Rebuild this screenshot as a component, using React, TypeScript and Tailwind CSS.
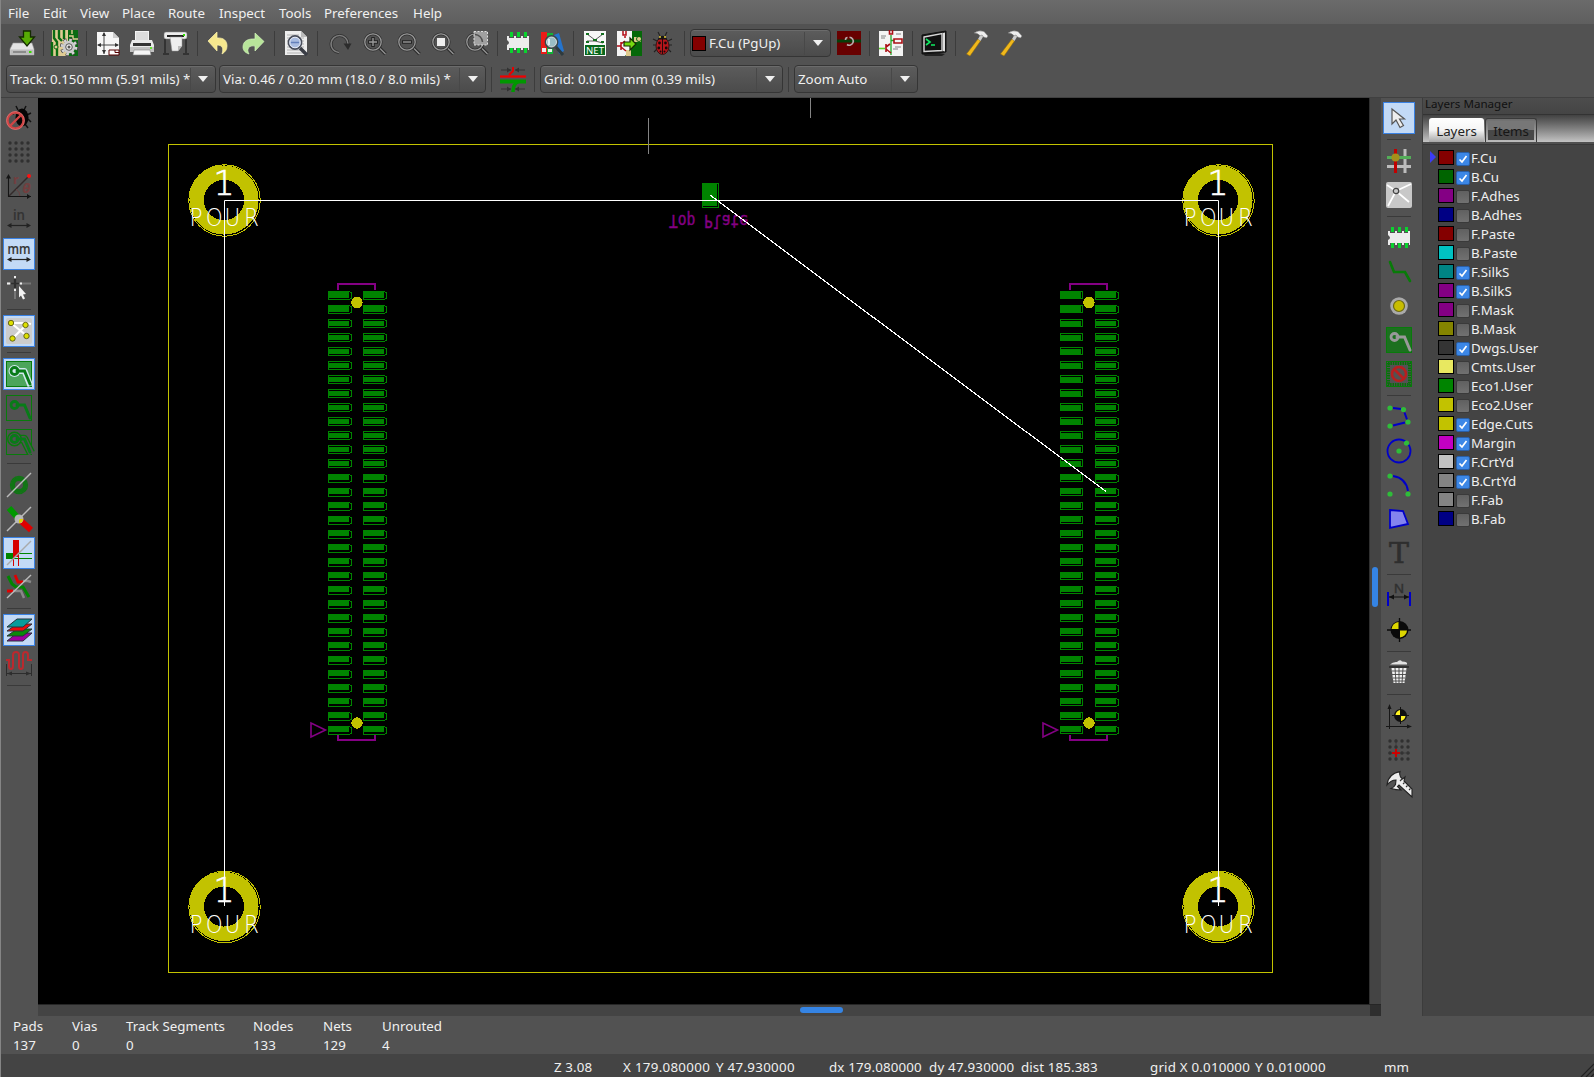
import React from "react";

type P = { children?: React.ReactNode };

const Icon = ({ children }: P) => (
  <svg className="block h-[26px] w-[26px] shrink-0 overflow-visible" viewBox="0 0 26 26" fill="none">
    {children}
  </svg>
);

const Save = () => (
  <Icon>
    <path d="M4 13h19l2 6v6H1v-6z" fill="#e4e4e4" stroke="#999" strokeWidth=".6" />
    <path d="M1.500 19.500h23v5.500h-23z" fill="#bdbdbd" />
    <path d="M4 22h13" stroke="#8b8b8b" strokeWidth="2" />
    <rect x="20" y="21" width="2.500" height="2" fill="#3ad900" />
    <path d="M14.500 1h7v6h4L18 16l-7.500-9h4z" fill="#57ab05" stroke="#142b00" strokeWidth="1.300" />
  </Icon>
);
const Board = () => (
  <Icon>
    <rect width="26" height="26" fill="#e0cc94" />
    <path d="M16 0h10v26H16z" fill="#0b6b12" />
    <path d="M17 6h4v3h5M20 0v4" stroke="#e0cc94" strokeWidth="1.400" />
    <path d="M2 0v8l3 4v14M7 0v8l3 3M12 0v9M0 12v14" stroke="#0b6b12" strokeWidth="2.400" />
    <circle cx="4" cy="17" r="2" fill="#e0cc94" stroke="#0b6b12" />
    <circle cx="17" cy="17" r="7" stroke="#4a4a4a" strokeWidth="4.200" strokeDasharray="3 2.500" />
    <circle cx="17" cy="17" r="7" stroke="#d4d4d4" strokeWidth="2.600" strokeDasharray="2.600 2.900" />
    <circle cx="17" cy="17" r="4.300" stroke="#ccc" strokeWidth="4" />
    <circle cx="17" cy="17" r="3.300" fill="#eee" stroke="#555" />
    <circle cx="17" cy="17" r="1.500" fill="#555" />
  </Icon>
);
const PageSize = () => (
  <Icon>
    <path d="M2 2h16l6 6v17H2z" fill="#f6f6f6" />
    <path d="M18 2v6h6z" fill="#ccc" />
    <path d="M9 3v21M3 15h20" stroke="#333" strokeWidth=".9" />
    <path d="m9 2-2 4h4zM9 24l-2-4h4zM2 15l4-2v4zM24 15l-4-2v4z" fill="#333" />
    <path d="M14 20h10v5H14zM20 20v2.500h4" fill="#fff" stroke="#500" />
  </Icon>
);
const Printer = () => (
  <Icon>
    <path d="M6 1h14v10H6z" fill="#f4f4f4" />
    <path d="M7 2h12v8H7z" fill="#ddd" />
    <path d="M3 10h20l2 5v6H1v-6z" fill="#e9e9e9" />
    <path d="M4 13h18v3H4z" fill="#333" />
    <path d="M1 17h24v5H1z" fill="#c2c2c2" />
    <path d="M5 20h16l1 5H4z" fill="#f5f5f5" stroke="#888" strokeWidth=".6" />
    <path d="M21 18h2" stroke="#4e0" strokeWidth="1.500" />
  </Icon>
);
const Plotter = () => (
  <Icon>
    <path d="M2 9v15M0 24h6M23 9v15M20 24h6" stroke="#333" strokeWidth="2" />
    <rect x="1" y="2" width="23" height="7" rx="2" fill="#ededed" stroke="#777" strokeWidth=".5" />
    <path d="M4 6h17" stroke="#222" strokeWidth="2" />
    <rect x="20" y="4" width="2" height="2" fill="#3d0" />
    <path d="M7 7h12v9l-4 5H9z" fill="#eee" stroke="#999" strokeWidth=".5" />
    <path d="M15 21v-5h4z" fill="#bbb" />
  </Icon>
);
const Undo = () => (
  <Icon>
    <path d="M11 2v6c7-.5 10 3 10 8 0 4-2 6-5 8 2-6 0-9-5-9v6L2 11z" fill="#f6e88e" stroke="#fff5ad" strokeWidth=".7" />
  </Icon>
);
const Redo = () => (
  <Icon>
    <path d="M15 3v6C8 8.500 3 11 3 17c0 4 3 6 6 7-3-5 0-9 6-8v5l9-9.500z" fill="#b8e59a" stroke="#d2f5bb" strokeWidth=".7" />
  </Icon>
);
const FindPage = () => (
  <Icon>
    <path d="M2 1h16l6 6v18H2z" fill="#eee" />
    <path d="M18 1v6h6z" fill="#bbb" />
    <path d="M4 5h12M4 8h17M4 11h17M4 14h17M4 17h17M4 20h17M4 23h17" stroke="#999" strokeWidth=".7" />
    <path d="m17 18 7 7" stroke="#3a3d45" strokeWidth="3.500" />
    <circle cx="12" cy="12.500" r="6.500" fill="#a9bce0" stroke="#4a4f5c" strokeWidth="1.800" />
    <circle cx="12" cy="12.500" r="5.300" stroke="#e8edf7" strokeWidth="1" />
    <path d="M8 12.500h8" stroke="#6480bb" strokeWidth="1.500" />
  </Icon>
);
const Refresh = () => (
  <Icon>
    <path d="M11 22.500A8.500 8.500 0 1 1 20 14" stroke="#2e2e2e" strokeWidth="3" />
    <path d="M11 22.500A8.500 8.500 0 1 1 20 14" stroke="#7c7c7c" strokeWidth="1.600" />
    <path d="M15.500 13.500h8L20 20z" fill="#2c2c2c" />
  </Icon>
);
const Mag = ({ kind }: { kind: string }) => (
  <Icon>
    <path d="m16.500 17 7 7" stroke="#2b2b2b" strokeWidth="3.600" />
    <path d="m18 18.500 5.500 5.500" stroke="#959595" strokeWidth="1.300" />
    <circle cx="11" cy="12" r="8.200" stroke="#303030" strokeWidth="2.800" />
    <circle cx="11" cy="12" r="8.200" stroke="#999" strokeWidth="1.300" />
    {kind === "in" && <path d="M11 7v10M6 12h10" stroke="#242424" strokeWidth="3.500" />}
    {kind === "in" && <path d="M11 8v8M7 12h8" stroke="#999" strokeWidth="1.400" />}
    {kind === "out" && <path d="M6 12h10" stroke="#242424" strokeWidth="3.500" />}
    {kind === "out" && <path d="M7 12h8" stroke="#999" strokeWidth="1.400" />}
    {kind === "fit" && <rect x="7" y="8" width="8" height="8" fill="#eee" />}
    {kind === "sel" && <rect x="10" y="1.500" width="13.500" height="13.500" fill="#a0a0a0" stroke="#ddd" strokeDasharray="2 1.500" />}
    {kind === "sel" && <path d="M11 4.500a8 8 0 0 1 7.500 7.500" stroke="#505050" strokeWidth="1.500" />}
  </Icon>
);
const Footprint = () => (
  <Icon>
    <path d="M5 2h3v5H5zM12 2h3v5h-3zM19 2h3v5h-3zM5 18h3v5H5zM12 18h3v5h-3zM19 18h3v5h-3z" fill="#0ad32f" />
    <path d="M2 6h2v2h5V6h2v2h5V6h2v2h4V6h2v14h-1v-2h-5v2h-2v-2h-5v2H9v-2H4v2H2v-5q4-2 0-5z" fill="#ececec" />
  </Icon>
);
const Library = () => (
  <Icon>
    <path d="M2 2h6v22H2z" fill="#ea1b17" />
    <path d="M8 3h6v21H8z" fill="#11b537" />
    <path d="m15 5 5-2 5 18-5 3z" fill="#2474cd" />
    <path d="M3 18h4v4H3zM9 19h4v3H9z" fill="#eee" />
    <path d="m17 17 7 8" stroke="#2e3a3e" strokeWidth="3" />
    <circle cx="12.500" cy="12" r="6" fill="#9abdc5" stroke="#38474b" strokeWidth="1.800" />
    <circle cx="12.500" cy="12" r="5" stroke="#eee" strokeWidth=".8" />
    <path d="M10 9v6" stroke="#ddf0f5" strokeWidth="2" />
  </Icon>
);
const Net = () => (
  <Icon>
    <rect x="2" y="1" width="22" height="25" fill="#f8f8f8" />
    <path d="m5 4 8 6 8-6M5 11h8l8 2" stroke="#333" strokeWidth=".8" />
    <path d="M4 3h3v2H4zM19 3h3v2h-3zM11 9h4v2h-4zM4 11h3v2H4zM19 11h3v2h-3z" fill="#136f1f" />
    <rect x="3" y="15" width="20" height="10" fill="#06671b" />
    <text x="4" y="23.500" fontSize="9.500" fontFamily="Noto Sans" textLength="18" fill="#fff">NET</text>
  </Icon>
);
const UpdatePcb = () => (
  <Icon>
    <rect x="1" y="1" width="15" height="25" fill="#f5f5f5" />
    <path d="M16 1h10v25H9l7-8z" fill="#066809" />
    <path d="M10 20h5v6h-5zM18 7h7v5h-7z" fill="#e0ca8d" />
    <circle cx="23" cy="9" r="2.500" stroke="#066809" />
    <path d="M7 1v4h3V1M1 16h4M5 12v8M5 14l4-3M5 17l5 4M9 8V6" stroke="#b20b15" strokeWidth="1.500" />
    <path d="M8 12h6V8l6 6-6 6v-4H8z" fill="#75da0f" stroke="#172b05" strokeWidth="1.200" />
  </Icon>
);
const Ladybug = () => (
  <Icon>
    <path d="m10 6-2-4M15 6l2-4M7 11l-4-2M6 15H3M7 19l-3 3M18 11l4-2M19 15h3M18 19l3 3" stroke="#222" strokeWidth="1.100" />
    <ellipse cx="12.500" cy="16" rx="6.500" ry="8.500" fill="#b7151b" stroke="#371313" />
    <path d="M7.500 9.500q5-7.500 10 0z" fill="#171717" />
    <path d="M12.500 8v16" stroke="#250b0b" />
    <g fill="#180909">
      <circle cx="9.500" cy="13" r="1.400" /><circle cx="15.500" cy="13" r="1.400" /><circle cx="8.800" cy="18" r="1.400" />
      <circle cx="16.200" cy="18" r="1.400" /><circle cx="10.500" cy="21.500" r="1" /><circle cx="14.500" cy="21.500" r="1" />
    </g>
    <path d="M9 7h2M14 7h2" stroke="#dec332" strokeWidth="1.500" />
  </Icon>
);
const LayerPair = () => (
  <Icon>
    <rect x="1" y="1" width="24" height="24" fill="#680000" />
    <path d="M1 11h24" stroke="#063f09" strokeWidth="3" />
    <path d="M9.500 10q0-2.500 2-2.500M13.500 7.200a4 4 0 1 1-2.500 7.300" stroke="#b7adad" strokeWidth="1.600" />
  </Icon>
);
const Schematic = () => (
  <Icon>
    <rect x="1" y="1" width="24" height="25" fill="#f4f4f4" />
    <path d="M13 5v20M13 10.500h3" stroke="#21a729" strokeWidth="1.300" />
    <path d="M1 18.500h6" stroke="#5cd129" strokeWidth="1.600" />
    <path d="M11.500 0v4h3V0M16 9h8v4h-8zM8 14v8M8 17l4-3M8 19l5 4" stroke="#aa1015" strokeWidth="1.600" />
    <path d="M3 6h5M18 4h5M15 19h5M3 8h4M17 17h6" stroke="#777" strokeWidth=".9" />
  </Icon>
);
const Terminal = () => (
  <Icon>
    <path d="M2 24q11-3 22 0l-3 2H4z" fill="#222" />
    <path d="m1 5 24-4v21L1 24z" fill="#171717" stroke="#111" />
    <path d="m3 7 18-3.500v17L3 21.500z" fill="#111" stroke="#d6d6d6" strokeWidth="1.400" />
    <path d="m22 3 2-.5v19l-2-.5z" fill="#ddd" />
    <path d="m5 9 4 3-4 3M10 15h4" stroke="#10ea63" strokeWidth="1.600" />
  </Icon>
);
const Hammer = () => (
  <Icon>
    <path d="m14 9 2.500 2L6 26l-3.500-2z" fill="#f0b81c" stroke="#956d07" strokeWidth=".5" />
    <path d="m14 9 3-5 2.500 2-3 5z" fill="#ccc" />
    <path d="M10 3q5-3.500 10-1.500l4 4.500-1.500 2-3-1-1.500-2-2 .8Q14 3 10 3z" fill="#eee" stroke="#777" strokeWidth=".5" />
  </Icon>
);
const TrackWidth = () => (
  <Icon>
    <path d="M13 1v4l-4 4" stroke="#e60000" strokeWidth="2" />
    <path d="M0 10.500h26" stroke="#f00000" strokeWidth="2.200" />
    <path d="M0 15.500h26" stroke="#009800" strokeWidth="4" />
    <path d="M18 16q-5 2-5 10" stroke="#009800" strokeWidth="3.500" />
    <path d="M1 4h10M15 4h10M1 23h10M15 23h10" stroke="#333" />
    <path d="M7 1.500 11 4 7 6.500zM19 1.500 15 4l4 2.500zM7 20.500l4 2.500-4 2.500zM19 20.500 15 23l4 2.500z" fill="#333" />
  </Icon>
);

const DrcOff = () => (
  <Icon>
    <path d="m12 5-2-4M18 5l2-4M21 10l4-2M22 14l3 3M19 19l3 4M8 9 5 8" stroke="#111" strokeWidth="1.500" />
    <ellipse cx="16" cy="12.500" rx="6.500" ry="9" fill="#050505" />
    <circle cx="9.500" cy="15.500" r="8" stroke="#cf4444" strokeWidth="2.400" />
    <path d="m4 21 11-11" stroke="#cf4444" strokeWidth="2.400" />
    <circle cx="9.500" cy="15.500" r="9" stroke="#ec8484" strokeWidth=".6" />
  </Icon>
);
const dots = [4, 10, 16, 22];
const GridDots = ({ cross = false }: { cross?: boolean }) => (
  <Icon>
    {dots.map((x) => dots.map((y) => <circle key={x + "-" + y} cx={x} cy={y} r="1.700" fill="#303030" />))}
    {cross && <path d="M10 2v22M2 16h22" stroke="#383838" strokeWidth=".8" />}
    {cross && <path d="M10 12v8M6 16h8" stroke="#cd0000" strokeWidth="2" />}
  </Icon>
);
const Polar = () => (
  <Icon>
    <path d="M2.500 23.500 22 4" stroke="#332b2b" strokeWidth="1.400" />
    <path d="M2.500 3v20.500H25" stroke="#151515" strokeWidth="1.100" />
    <path d="M10 16q4 3 4 7" stroke="#6a3f3f" />
    <path d="M0 5.500 2.500 1 5 5.500zM21 21l4 2.500L21 26z" fill="#151515" />
    <text x="7" y="11" fontSize="13" fontWeight="700" fontFamily="Noto Sans" fill="#733f3f">r</text>
    <text x="16.500" y="19.500" fontSize="12" fontStyle="italic" fontWeight="700" fontFamily="DejaVu Sans" fill="#733f3f">θ</text>
    <circle cx="23" cy="3" r="2" fill="#ff1111" />
  </Icon>
);
const Unit = ({ t }: { t: string }) => (
  <Icon>
    <text
      x={t === "mm" ? 1.5 : 7}
      y="13"
      textLength={t === "mm" ? 23 : 12}
      lengthAdjust="spacingAndGlyphs"
      fontSize="14.500"
      fontWeight="500"
      fontFamily="Noto Sans"
      fill="#333"
      stroke="#333"
      strokeWidth=".2"
    >
      {t}
    </text>
    <path d="M3 18.500h20" stroke="#222" strokeWidth="1.200" />
    <path d="m1 18.500 4.500-2.500v5zM25 18.500 20.500 16v5z" fill="#222" />
  </Icon>
);
const CursorShape = () => (
  <Icon>
    <path d="M9 1v23M1 8.500h24" stroke="#777" strokeWidth="2" />
    <path d="M9 1v2M9 14v2M1 8.500h3M14 8.500h2" stroke="#eee" strokeWidth="2" />
    <path d="M9 4v9M5 8.500h8" stroke="#2f2f2f" strokeWidth="2.200" />
    <path d="m13 11 7 8-3 .5 2 4-2 1-2-4-2 2z" fill="#f2f2f2" />
  </Icon>
);
const Ratsnest = () => (
  <Icon>
    <rect width="26" height="26" rx="2" fill="#ccc" />
    <path d="M5 5h15l5 1M5 5l16 13M20 7 7 20" stroke="#fff" strokeWidth="2.200" />
    {[[5, 5], [19.500, 7], [6.500, 20.500], [20.500, 18]].map(([x, y]) => (
      <circle key={x} cx={x} cy={y} r="2.700" fill="#dde000" stroke="#5b5b12" strokeWidth=".9" />
    ))}
  </Icon>
);
const Zone = ({ kind }: { kind: string }) => (
  <Icon>
    <rect x=".5" y=".5" width="25" height="25" fill={kind === "fill" ? "#4ca55c" : kind === "add" ? "#1c701f" : "none"} stroke="#087b0b" />
    {kind === "fill" && <path d="M9 10h9.500l6 15" stroke="#d1e8ef" strokeWidth="6" strokeLinejoin="round" />}
    {kind === "fill" && <circle cx="8.500" cy="10" r="6" fill="#d1e8ef" />}
    {kind === "outline" && <path d="M9 10h9l7 14" stroke="#087b0b" strokeWidth="8.500" strokeLinejoin="round" />}
    {kind === "outline" && <path d="M9 10h9l7.500 15" stroke="#525252" strokeWidth="6" strokeLinejoin="round" />}
    {kind === "outline" && <circle cx="8.500" cy="10" r="6.800" fill="#525252" stroke="#087b0b" strokeWidth="1.400" />}
    <path d="M11 10h7.500l5.500 13" stroke={kind === "add" ? "#999" : "#087b18"} strokeWidth="3" strokeLinecap="round" />
    <circle cx="8.500" cy="10" r="3.500" stroke={kind === "add" ? "#999" : "#087b18"} strokeWidth="2.800" />
  </Icon>
);
const PadSketch = () => (
  <Icon>
    <circle cx="13" cy="13" r="8.500" stroke="#107614" strokeWidth="1.300" />
    <circle cx="13" cy="13" r="6" stroke="#107614" strokeWidth="4" />
    <path d="M1 25 25 1" stroke="#bbb" strokeWidth="1.400" />
  </Icon>
);
const TrackVia = () => (
  <Icon>
    <path d="m3 2 9 10" stroke="#009800" strokeWidth="6" />
    <path d="m14 14 11 10" stroke="#df0000" strokeWidth="6" />
    <circle cx="13" cy="13" r="4.500" fill="#b5b5b5" />
    <path d="M13 17v-4h4q0 4-4 4" fill="#ddd400" />
    <path d="M1 25 25 1" stroke="#bbb" strokeWidth="1.400" />
  </Icon>
);
const HighContrast = () => (
  <Icon>
    <path d="M0 13.500h26M0 18.500h26" stroke="#008500" strokeWidth="1.200" />
    <path d="M0 16h7" stroke="#008500" strokeWidth="6" />
    <path d="M10 0v17" stroke="#d60000" strokeWidth="6" />
    <path d="M7.500 15v11M12.500 15v11" stroke="#d60000" />
    <path d="M1 25 25 1" stroke="#aaa" strokeWidth="1.400" />
  </Icon>
);
const CurvedTrack = () => (
  <Icon>
    <path d="m2 2 4 8 4 3h7l6 10" stroke="#008500" strokeWidth="3" />
    <path d="m9 1 3 7h5M1 17h6" stroke="#e00000" strokeWidth="2.800" />
    <path d="M17 7h5l3 1M7 17h8l3 7" stroke="#888" strokeWidth="2.500" />
    <path d="M1 24 25 1" stroke="#bbb" strokeWidth="1.400" />
  </Icon>
);
const Layers = () => (
  <Icon>
    <g stroke="#29313a" strokeWidth="1">
      <path d="M11 16h15l-9 8H1z" fill="#9d009d" />
      <path d="M11 12h15l-9 7H1z" fill="#0a8b0a" />
      <path d="M11 7h15l-9 7H1z" fill="#e90c0c" />
      <path d="M11 2h15l-9 8H1z" fill="#079b9b" />
    </g>
  </Icon>
);
const Microwave = () => (
  <Icon>
    <path d="M0 9h3v6q0 3 2 3t2-3V4q0-3 3-3t3 3v11q0 3 2 3t2-3V4q0-3 2.500-3T22 4v5h4" stroke="#bb292e" strokeWidth="2" />
    <path d="M.5 13v12M25.500 13v12M1 22.500h24" stroke="#2d2d2d" />
    <path d="m1 22.500 5-2v4zM25 22.500l-5-2v4z" fill="#2d2d2d" />
  </Icon>
);
const Arrow = () => (
  <Icon>
    <path d="M6 4v15l4-4 4 7.500 3.500-2-4-6.500h5z" fill="#eee" stroke="#555" strokeWidth="1.200" />
  </Icon>
);
const Highlight = () => (
  <Icon>
    <path d="M19 1v24M1 18.500h24" stroke="#bcbcbc" strokeWidth="3" />
    <path d="M1 9.500h24" stroke="#53ad58" strokeWidth="3" />
    <path d="M9.500 1v24" stroke="#c10000" strokeWidth="3" />
    <circle cx="9.500" cy="9.500" r="4" fill="#a48f1c" />
  </Icon>
);
const LocalRats = () => (
  <Icon>
    <rect width="26" height="26" rx="2" fill="#c8c8c8" />
    <path d="M10 9 1 3M10 9l15-7M10 9l13 11M10 9 2 24" stroke="#fff" strokeWidth="1.700" />
    <circle cx="10" cy="9" r="2.700" fill="#c8c8c8" stroke="#444" strokeWidth="1.200" />
  </Icon>
);
const Route = () => (
  <Icon>
    <path d="m4 3 4 10h11l5 9" stroke="#087b08" strokeWidth="2.600" strokeLinecap="round" />
  </Icon>
);
const Via = () => (
  <Icon>
    <circle cx="13" cy="13" r="8.800" fill="#aaa" />
    <circle cx="13" cy="13" r="5.500" fill="#c8bd00" stroke="#6c6914" strokeWidth="1.200" />
  </Icon>
);
const Keepout = () => (
  <Icon>
    <rect x="2" y="2" width="22" height="22" stroke="#076f0b" strokeWidth="4" strokeDasharray="1.500 .9" />
    <rect x=".5" y=".5" width="25" height="25" stroke="#087b0b" />
    <circle cx="13" cy="13" r="7" stroke="#b71f1f" strokeWidth="2.600" />
    <path d="m8 8 10 10" stroke="#b71f1f" strokeWidth="2.600" />
  </Icon>
);
const Dot = ({ x, y }: { x: number; y: number }) => <circle cx={x} cy={y} r="2.600" fill="#2ebd39" />;
const Poly = () => (
  <Icon>
    <path d="m7 4 8 1M18.500 8.500l2.500 7M19 18.500 7 21.500" stroke="#0000c8" strokeWidth="2" />
    <Dot x={4} y={4} /><Dot x={17.500} y={5.500} /><Dot x={22} y={18} /><Dot x={4} y={22} />
  </Icon>
);
const CircleTool = () => (
  <Icon>
    <circle cx="13" cy="13" r="11.500" stroke="#0000c8" strokeWidth="1.800" />
    <Dot x={13} y={13} /><Dot x={20.500} y={5} />
  </Icon>
);
const ArcTool = () => (
  <Icon>
    <path d="M7 4q13 2 15 15" stroke="#0000c8" strokeWidth="1.900" />
    <Dot x={4} y={4} /><Dot x={4} y={22} /><Dot x={22} y={22} />
  </Icon>
);
const Polygon = () => (
  <Icon>
    <path d="m4 4 13 1 5 13-18 4z" fill="#8484ee" stroke="#0000c8" strokeWidth="1.800" />
  </Icon>
);
const TextTool = () => (
  <Icon>
    <text x="3" y="22.500" fontSize="27" textLength="20" lengthAdjust="spacingAndGlyphs" fontFamily="DejaVu Serif" fill="#2e2e2e" stroke="#2e2e2e" strokeWidth=".5">T</text>
  </Icon>
);
const Dimension = () => (
  <Icon>
    <text x="8" y="10" fontSize="13" textLength="10" lengthAdjust="spacingAndGlyphs" fontFamily="Liberation Sans" fill="#303030" stroke="#303030" strokeWidth=".4">N</text>
    <path d="M2 9v14M24 9v14" stroke="#0000c8" strokeWidth="2" />
    <path d="M3 14h20" stroke="#111" />
    <path d="m3 14 5-2.500v5zM23 14l-5-2.500v5z" fill="#111" />
  </Icon>
);
const Target = () => (
  <Icon>
    <path d="M13.500 1v24M1 13h24" stroke="#0a0a0a" strokeWidth="1.300" />
    <circle cx="13.500" cy="13" r="9" fill="#0a0a0a" />
    <path d="M12.500 12v-7a7.500 7.500 0 0 0-7 7zM14 13.500v7a7.500 7.500 0 0 0 7-7z" fill="#ddd600" />
  </Icon>
);
const Trash = () => (
  <Icon>
    <path d="M4 4.500q3-3 7-2.500 3-3 5-.5 6 0 5 3z" fill="#e2e2e2" />
    <path d="M3 7h20" stroke="#333" strokeWidth="2" />
    <path d="m5.500 8 2 15h11l2-15z" fill="#f1f1f1" />
    <path d="m9 8 1 15M13 8v15M17 8l-1 15M6 11h14M6 14.500h14M7 18h12M7 21h12" stroke="#444" strokeWidth=".9" />
  </Icon>
);
const Origin = () => (
  <Icon>
    <path d="M3.500 4v22M0 23.500h23" stroke="#171717" />
    <path d="m1.500 6 2-5 2 5zM21 21.500l5 2-5 2z" fill="#171717" />
    <path d="M14.500 4v17M6 12.500h17" stroke="#111" />
    <circle cx="14.500" cy="12.500" r="6.500" fill="#101010" />
    <path d="M14 12V7q-4 1-4.500 5zM15 13v5q4-1 4.500-5z" fill="#fff321" />
  </Icon>
);
const Caliper = () => (
  <Icon>
    <path
      d="M1 14Q2 3 14 .5q-1 3 .5 5.500l2 2 2.500-2-1 4 8 8V26L13 14l-1.500 1.500 3.500 3.500q-5 0-10-1.500 3-1 4.500-4L10 9Q5 9 1 14z"
      fill="#eee"
      stroke="#222"
      strokeWidth="1.100"
    />
    <path d="m14 10 2-2M17 13l1.500-1.500M20 16l1.500-1.500M23 19l1.500-1.500" stroke="#333" strokeWidth="1.100" />
  </Icon>
);

const Tool = ({ children, on }: P & { on?: boolean }) => (
  <div className="flex h-[34px] w-full items-center justify-center">
    <div
      className={
        on
          ? "flex h-8 w-8 items-center justify-center border border-[#3a82e4] bg-[#c3daf6]"
          : "flex h-8 w-8 items-center justify-center"
      }
    >
      {children}
    </div>
  </div>
);
const HSep = () => (
  <div className="flex h-[9px] w-full items-center justify-center">
    <div className="h-px w-6 bg-[#3a3a3a]" />
  </div>
);
const VSep = ({ className }: { className: string }) => (
  <div className={"h-[25px] w-px shrink-0 bg-[#3c3c3c] " + className} />
);

const Combo = ({ className, text, swatch }: { className: string; text: string; swatch?: boolean }) => (
  <div
    className={
      "flex h-7 shrink-0 items-center rounded-[4px] border border-[#353535] bg-gradient-to-b from-[#5c5c5c] to-[#4b4b4b] shadow-[inset_0_1px_0_#6b6b6b] " +
      className
    }
  >
    {swatch && <span className="ml-px h-[15px] w-[14px] border border-black bg-[#840000]" />}
    <span className="grow pl-[3px]">{text}</span>
    <span className="flex h-[23px] w-[26px] items-center justify-center border-l border-[#484848]">
      <span className="h-0 w-0 border-x-[5px] border-t-[6px] border-x-transparent border-t-[#f0f0f0]" />
    </span>
  </div>
);

const PadColumn = ({ x, square }: { x: number; square?: boolean }) => (
  <g shapeRendering="crispEdges">
    {Array.from({ length: 32 }, (_, i) => {
      const y = 291 + i * 14 + (i > 12 ? 1 : 0);
      const tail = i < 13 && i > 1;
      return (
        <g key={i}>
          <path
            d={
              square
                ? `M${x + 0.5} ${y + 0.5}h22v7h-22z`
                : `M${x + 0.5} ${y + 0.5}h21l2 1.500v5l-2 1.500h-21z`
            }
            fill="none"
            stroke="#008400"
          />
          <rect x={x} y={tail ? y + 2 : y} width="21" height={tail ? 5 : i < 2 ? 7 : 6} fill="#008400" />
        </g>
      );
    })}
  </g>
);

const Connector = ({ x, square }: { x: number; square?: boolean }) => (
  <g>
    <PadColumn x={x} square={square} />
    <PadColumn x={x + 35} />
    <circle cx={x + 29} cy="302.500" r="5.700" fill="#c2c200" shapeRendering="crispEdges" />
    <circle cx={x + 29} cy="723" r="5.700" fill="#c2c200" shapeRendering="crispEdges" />
    <path
      d={`M${x + 10} 290v-6h37v6M${x + 10} 735v5h37v-5`}
      stroke="#840084"
      strokeWidth="1.800"
      fill="none"
      shapeRendering="crispEdges"
    />
    <path d={`M${x - 17} 723v14l14.500-7z`} fill="none" stroke="#840084" strokeWidth="1.600" />
  </g>
);

const Hole = ({ x, y }: { x: number; y: number }) => (
  <g>
    <circle cx={x - 0.5} cy={y - 0.5} r="27.300" stroke="#c2c200" strokeWidth="14.500" fill="none" shapeRendering="crispEdges" />
    <circle cx={x} cy={y} r="35.700" stroke="#c2c200" fill="none" shapeRendering="crispEdges" />
  </g>
);
const HoleText = ({ x, y }: { x: number; y: number }) => (
  <g fill="#fff" fontFamily="DejaVu Sans" fontWeight="200">
    <text x={x - 11} y={y - 5.5} fontSize="34" textLength="21" lengthAdjust="spacingAndGlyphs" stroke="#fff" strokeWidth=".7">
      1
    </text>
    <text transform={`translate(${x - 35} ${y + 25.5}) scale(.88 1)`} x="0 18.500 39.700 62" y="0" fontSize="24.500">
      POUR
    </text>
  </g>
);

const holes = [
  [224.5, 200.5],
  [1218.5, 200.5],
  [224.5, 907],
  [1218.5, 907],
];

const Canvas = () => (
  <svg className="block h-[906px] w-[1331px] bg-black" viewBox="38 98 1331 906">
    <rect x="168.500" y="144.500" width="1104" height="828" fill="none" stroke="#c2c200" />
    <path d="M648.500 118v36M810.500 98v20" stroke="#848484" />
    {holes.map(([x, y]) => <Hole key={x + "-" + y} x={x} y={y} />)}
    <Connector x={328} />
    <Connector x={1060} square />
    <rect x="702" y="183" width="15" height="23" fill="#008400" />
    <rect x="702.500" y="183.500" width="16" height="24" fill="none" stroke="#008400" />
    <text
      transform="translate(669 215) scale(1 -1)"
      y="0"
      fontSize="17"
      fontFamily="DejaVu Sans Mono"
      textLength="79"
      lengthAdjust="spacingAndGlyphs"
      fill="#840084"
      stroke="#840084"
      strokeWidth=".4"
    >
      Top Plate
    </text>
    {holes.map(([x, y]) => <HoleText key={x + "-" + y} x={x} y={y} />)}
    <path d="M224.500 906V200.500h994V906" fill="none" stroke="#fff" />
    <path d="m710.500 195.500 395.500 296" stroke="#fff" strokeWidth="1.200" shapeRendering="crispEdges" />
  </svg>
);

const layers: [string, string, boolean][] = [
  ["F.Cu", "#840000", true],
  ["B.Cu", "#006400", true],
  ["F.Adhes", "#840084", false],
  ["B.Adhes", "#000084", false],
  ["F.Paste", "#840000", false],
  ["B.Paste", "#00c2c2", false],
  ["F.SilkS", "#008484", true],
  ["B.SilkS", "#840084", true],
  ["F.Mask", "#840084", false],
  ["B.Mask", "#848400", false],
  ["Dwgs.User", "#343434", true],
  ["Cmts.User", "#e8e860", false],
  ["Eco1.User", "#008400", false],
  ["Eco2.User", "#c2c200", false],
  ["Edge.Cuts", "#c2c200", true],
  ["Margin", "#c200c2", true],
  ["F.CrtYd", "#c2c2c2", true],
  ["B.CrtYd", "#848484", true],
  ["F.Fab", "#848484", false],
  ["B.Fab", "#000084", false],
];

const LayerRow = ({ name, color, on, first }: { name: string; color: string; on: boolean; first: boolean }) => (
  <div className="flex h-[19px] items-center pl-[7px]">
    <span className="flex w-2">
      {first && <span className="-mt-1 h-0 w-0 border-y-[6px] border-l-[6px] border-y-transparent border-l-[#3c3cf5]" />}
    </span>
    <span className="-mt-0.5 h-[15px] w-4 border border-black" style={{ background: color }} />
    <span
      className={
        on
          ? "ml-0.5 flex h-[14px] w-[14px] items-center justify-center rounded-[2px] border border-[#2a5ea5] bg-[#3c87e6]"
          : "ml-0.5 h-[14px] w-[14px] rounded-[2px] border border-[#3a3a3a] bg-gradient-to-b from-[#606060] to-[#717171]"
      }
    >
      {on && (
        <svg className="h-3 w-3" viewBox="0 0 12 12" fill="none">
          <path d="m2.500 6.500 2.500 2.500L9.500 3" stroke="#fff" strokeWidth="1.700" />
        </svg>
      )}
    </span>
    <span className="ml-px">{name}</span>
  </div>
);

const Stat = ({ className, label, value }: { className: string; label: string; value: string }) => (
  <div className={"flex flex-col " + className}>
    <span className="h-[19px] leading-[19px]">{label}</span>
    <span className="h-[19px] leading-[19px]">{value}</span>
  </div>
);

export default function App() {
  return (
    <div className="flex h-[1077px] w-[1594px] flex-col overflow-hidden border-l border-[#858585] bg-[#525252] font-['Noto_Sans',sans-serif] text-[13.33px] leading-[19px] whitespace-pre text-[#f0f0f0]">
      <div className="flex h-6 shrink-0 items-center bg-gradient-to-b from-[#6b6b6b] to-[#5f5f5f] pt-[3px] pl-[7px]">
        <span className="w-[35px]">File</span>
        <span className="w-[37px]">Edit</span>
        <span className="w-[42px]">View</span>
        <span className="w-[46px]">Place</span>
        <span className="w-[51px]">Route</span>
        <span className="w-[60px]">Inspect</span>
        <span className="w-[45px]">Tools</span>
        <span className="w-[89px]">Preferences</span>
        <span>Help</span>
      </div>

      <div className="flex h-[38px] shrink-0 items-center pl-2">
        <Save />
        <VSep className="ml-2" />
        <div className="ml-2 flex"><Board /></div>
        <VSep className="ml-2" />
        <div className="ml-2 flex gap-2"><PageSize /><Printer /><Plotter /></div>
        <VSep className="ml-2" />
        <div className="ml-2 flex gap-2"><Undo /><Redo /></div>
        <VSep className="ml-2" />
        <div className="ml-2 flex"><FindPage /></div>
        <VSep className="ml-2" />
        <div className="ml-[10px] flex gap-2"><Refresh /><Mag kind="in" /><Mag kind="out" /><Mag kind="fit" /><Mag kind="sel" /></div>
        <VSep className="ml-[7px]" />
        <div className="ml-[7px] flex gap-2"><Footprint /><Library /></div>
        <VSep className="ml-2" />
        <div className="ml-2 flex gap-2"><Net /><UpdatePcb /><Ladybug /></div>
        <VSep className="ml-2" />
        <Combo className="ml-[5px] w-[141px]" text="F.Cu (PgUp)" swatch />
        <div className="ml-[5px] flex"><LayerPair /></div>
        <VSep className="ml-[7px]" />
        <div className="ml-2 flex"><Schematic /></div>
        <VSep className="ml-2" />
        <div className="ml-2 flex"><Terminal /></div>
        <VSep className="ml-2" />
        <div className="ml-2 flex gap-2"><Hammer /><Hammer /></div>
      </div>

      <div className="flex h-9 shrink-0 items-center border-b border-[#404040] pb-px pl-[5px]">
        <Combo className="w-[210px]" text="Track: 0.150 mm (5.91 mils) *" />
        <Combo className="ml-[3px] w-[267px]" text="Via: 0.46 / 0.20 mm (18.0 / 8.0 mils) *" />
        <VSep className="ml-[5px]" />
        <div className="ml-2 flex"><TrackWidth /></div>
        <VSep className="ml-2" />
        <Combo className="ml-[5px] w-[243px]" text="Grid: 0.0100 mm (0.39 mils)" />
        <VSep className="ml-[5px]" />
        <Combo className="ml-[5px] w-[124px]" text="Zoom Auto" />
      </div>

      <div className="flex h-[918px] shrink-0">
        <div className="flex w-[37px] shrink-0 flex-col items-center pt-[3px] pr-px">
          <Tool><DrcOff /></Tool>
          <Tool><GridDots /></Tool>
          <Tool><Polar /></Tool>
          <Tool><Unit t="in" /></Tool>
          <Tool on><Unit t="mm" /></Tool>
          <Tool><CursorShape /></Tool>
          <HSep />
          <Tool on><Ratsnest /></Tool>
          <HSep />
          <Tool on><Zone kind="fill" /></Tool>
          <Tool><Zone kind="none" /></Tool>
          <Tool><Zone kind="outline" /></Tool>
          <HSep />
          <Tool><PadSketch /></Tool>
          <Tool><TrackVia /></Tool>
          <Tool on><HighContrast /></Tool>
          <Tool><CurvedTrack /></Tool>
          <HSep />
          <Tool on><Layers /></Tool>
          <Tool><Microwave /></Tool>
          <HSep />
        </div>

        <div className="flex w-[1343px] shrink-0 flex-col">
          <div className="flex h-[906px]">
            <Canvas />
            <div className="flex w-3 flex-col items-center border-l border-[#303030] bg-[#444] pr-px">
              <div className="mt-[469px] h-10 w-[6px] rounded-full bg-[#3584e4]" />
            </div>
          </div>
          <div className="flex h-3 border-t border-[#262626] bg-[#444]">
            <div className="mt-0.5 ml-[762px] h-[6px] w-[43px] rounded-full bg-[#3584e4]" />
            <div className="ml-auto w-[11px] bg-[#2e2e2e]" />
          </div>
        </div>

        <div className="flex w-[42px] shrink-0 flex-col items-center border-r border-[#3c3c3c] pt-[3px] pr-[6px]">
          <Tool on><Arrow /></Tool>
          <HSep />
          <Tool><Highlight /></Tool>
          <Tool><LocalRats /></Tool>
          <HSep />
          <Tool><Footprint /></Tool>
          <Tool><Route /></Tool>
          <Tool><Via /></Tool>
          <Tool><Zone kind="add" /></Tool>
          <Tool><Keepout /></Tool>
          <HSep />
          <Tool><Poly /></Tool>
          <Tool><CircleTool /></Tool>
          <Tool><ArcTool /></Tool>
          <Tool><Polygon /></Tool>
          <Tool><TextTool /></Tool>
          <HSep />
          <Tool><Dimension /></Tool>
          <Tool><Target /></Tool>
          <HSep />
          <Tool><Trash /></Tool>
          <HSep />
          <Tool><Origin /></Tool>
          <Tool><GridDots cross /></Tool>
          <Tool><Caliper /></Tool>
        </div>

        <div className="flex grow flex-col bg-[#444]">
          <div className="h-[17px] border-b border-[#333] bg-gradient-to-b from-[#4d4d4d] to-[#454545] pl-0.5 text-[11.6px] leading-[12px] text-[#111]">
            Layers Manager
          </div>
          <div className="flex h-[27px] items-end gap-px bg-gradient-to-b from-[#424242] to-[#c4c4c4] pl-[6px]">
            <div className="flex h-6 w-[55px] items-center justify-center rounded-t-[3px] bg-gradient-to-b from-white via-[#f5f5f5] to-[#a8a8a8] pt-0.5 text-[#222]">
              Layers
            </div>
            <div className="flex h-6 w-[52px] rounded-t-[3px] border border-b-0 border-[#3a3a3a] bg-gradient-to-b from-[#6d6d6d] to-[#bdbdbd] p-0.5">
              <div className="flex grow items-center justify-center bg-gradient-to-b from-[#777] from-45% to-[#484848] to-50% pt-0.5 text-[#161616]">Items</div>
            </div>
          </div>
          <div className="mb-1 h-[3px] border-b border-[#393939] bg-[#505050]" />
          {layers.map(([name, color, on], i) => (
            <LayerRow key={name} name={name} color={color} on={on} first={i === 0} />
          ))}
        </div>
      </div>

      <div className="flex h-[38px] shrink-0 pt-px pl-3">
        <Stat className="w-[59px]" label="Pads" value="137" />
        <Stat className="w-[54px]" label="Vias" value="0" />
        <Stat className="w-[127px]" label="Track Segments" value="0" />
        <Stat className="w-[70px]" label="Nodes" value="133" />
        <Stat className="w-[59px]" label="Nets" value="129" />
        <Stat className="w-20" label="Unrouted" value="4" />
      </div>
      <div className="flex h-[23px] shrink-0 items-center overflow-hidden bg-[#444] pt-1 pl-[553px]">
        <span className="w-[69px] tracking-[0.1px]">Z 3.08</span>
        <span className="w-[93px] tracking-[0.3px]">X 179.080000</span>
        <span className="w-[113px] tracking-[0.3px]">Y 47.930000</span>
        <span className="w-[100px] tracking-[0.15px]">dx 179.080000</span>
        <span className="w-[92px] tracking-[0.2px]">dy 47.930000</span>
        <span className="w-[129px] tracking-[0.1px]">dist 185.383</span>
        <span className="w-[105px] tracking-[0.2px]">grid X 0.010000</span>
        <span className="w-[129px] tracking-[0.3px]">Y 0.010000</span>
        <span>mm</span>
        <svg className="ml-auto h-4 w-4 self-end" viewBox="0 0 16 16" stroke="#222" strokeWidth="1.200">
          <path d="M3 16 16 3M8 16l8-8M13 16l3-3" />
        </svg>
      </div>
    </div>
  );
}
